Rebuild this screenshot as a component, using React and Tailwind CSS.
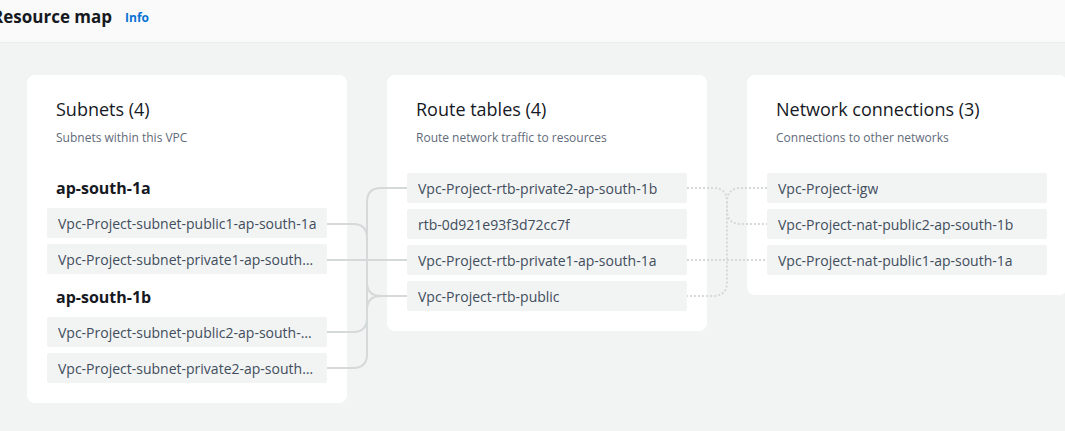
import React from "react";

const font = { fontFamily: '"Open Sans", "Noto Sans", Arial, sans-serif' };

function Row({ children }) {
  return (
    <div className="h-[30px] bg-[#f2f3f3] rounded-[2px] pl-[11px] pr-[10px] flex items-center text-[14px] text-[#414d5c]">
      <span className="truncate">{children}</span>
    </div>
  );
}

function CardHeader({ title, sub }) {
  return (
    <div className="pl-[9px] pt-[2px]">
      <div className="text-[18px] leading-[24px] text-[#16191f]">{title}</div>
      <div className="mt-[9px] text-[12px] leading-[16px] text-[#5f6b7a]">{sub}</div>
    </div>
  );
}

export default function App() {
  return (
    <div className="w-[1065px] h-[431px] overflow-hidden bg-[#f2f3f3]" style={font}>
      <div className="h-[43px] bg-[#fafafa] border-b border-[#e9ebed] flex items-center ml-[-8px] gap-[13px]">
        <span className="text-[17px] font-bold text-[#16191f] leading-[24px] -mt-[8px] whitespace-nowrap">Resource map</span>
        <span className="text-[12px] font-bold text-[#0972d3] -mt-[6px]">Info</span>
      </div>
      <div className="relative h-[388px]">
        <div className="flex items-start gap-[40px] pl-[27px] pt-[32px]">
          <div className="w-[320px] shrink-0 bg-white rounded-[8px] p-[20px]">
            <CardHeader title="Subnets (4)" sub="Subnets within this VPC" />
            <div className="pl-[9px] mt-[31px] text-[16px] leading-[22px] font-bold text-[#16191f]">ap-south-1a</div>
            <div className="mt-[9px] flex flex-col gap-[6px]">
              <Row>Vpc-Project-subnet-public1-ap-south-1a</Row>
              <Row>Vpc-Project-subnet-private1-ap-south-1a</Row>
            </div>
            <div className="pl-[9px] mt-[12px] text-[16px] leading-[22px] font-bold text-[#16191f]">ap-south-1b</div>
            <div className="mt-[9px] flex flex-col gap-[6px]">
              <Row>Vpc-Project-subnet-public2-ap-south-1b</Row>
              <Row>Vpc-Project-subnet-private2-ap-south-1b</Row>
            </div>
          </div>
          <div className="w-[320px] shrink-0 bg-white rounded-[8px] p-[20px]">
            <CardHeader title="Route tables (4)" sub="Route network traffic to resources" />
            <div className="mt-[27px] flex flex-col gap-[6px]">
              <Row>Vpc-Project-rtb-private2-ap-south-1b</Row>
              <Row>rtb-0d921e93f3d72cc7f</Row>
              <Row>Vpc-Project-rtb-private1-ap-south-1a</Row>
              <Row>Vpc-Project-rtb-public</Row>
            </div>
          </div>
          <div className="w-[320px] shrink-0 bg-white rounded-[8px] p-[20px]">
            <CardHeader title="Network connections (3)" sub="Connections to other networks" />
            <div className="mt-[27px] flex flex-col gap-[6px]">
              <Row>Vpc-Project-igw</Row>
              <Row>Vpc-Project-nat-public2-ap-south-1b</Row>
              <Row>Vpc-Project-nat-public1-ap-south-1a</Row>
            </div>
          </div>
        </div>
        <svg className="absolute left-0 top-0 pointer-events-none" width="1065" height="388" viewBox="0 43 1065 388" fill="none">
          <g stroke="#d5d9d9" strokeWidth="2" fill="none">
            <path d="M327,368 H353 Q367,368 367,354 V202 Q367,188 381,188 H407" />
            <path d="M327,224 H353 Q367,224 367,238 V282 Q367,296 381,296 H407" />
            <path d="M327,260 H407" />
            <path d="M327,332 H353 Q367,332 367,318 V310 Q367,296 381,296 H407" />
          </g>
          <g stroke="#d5d9d9" strokeWidth="2" strokeDasharray="2 2" fill="none">
            <path d="M687,188 H713 Q727,188 727,202 V210 Q727,224 741,224 H767" />
            <path d="M767,188 H741 Q727,188 727,202 V282 Q727,296 713,296 H687" />
            <path d="M687,260 H767" />
          </g>
        </svg>
      </div>
    </div>
  );
}
